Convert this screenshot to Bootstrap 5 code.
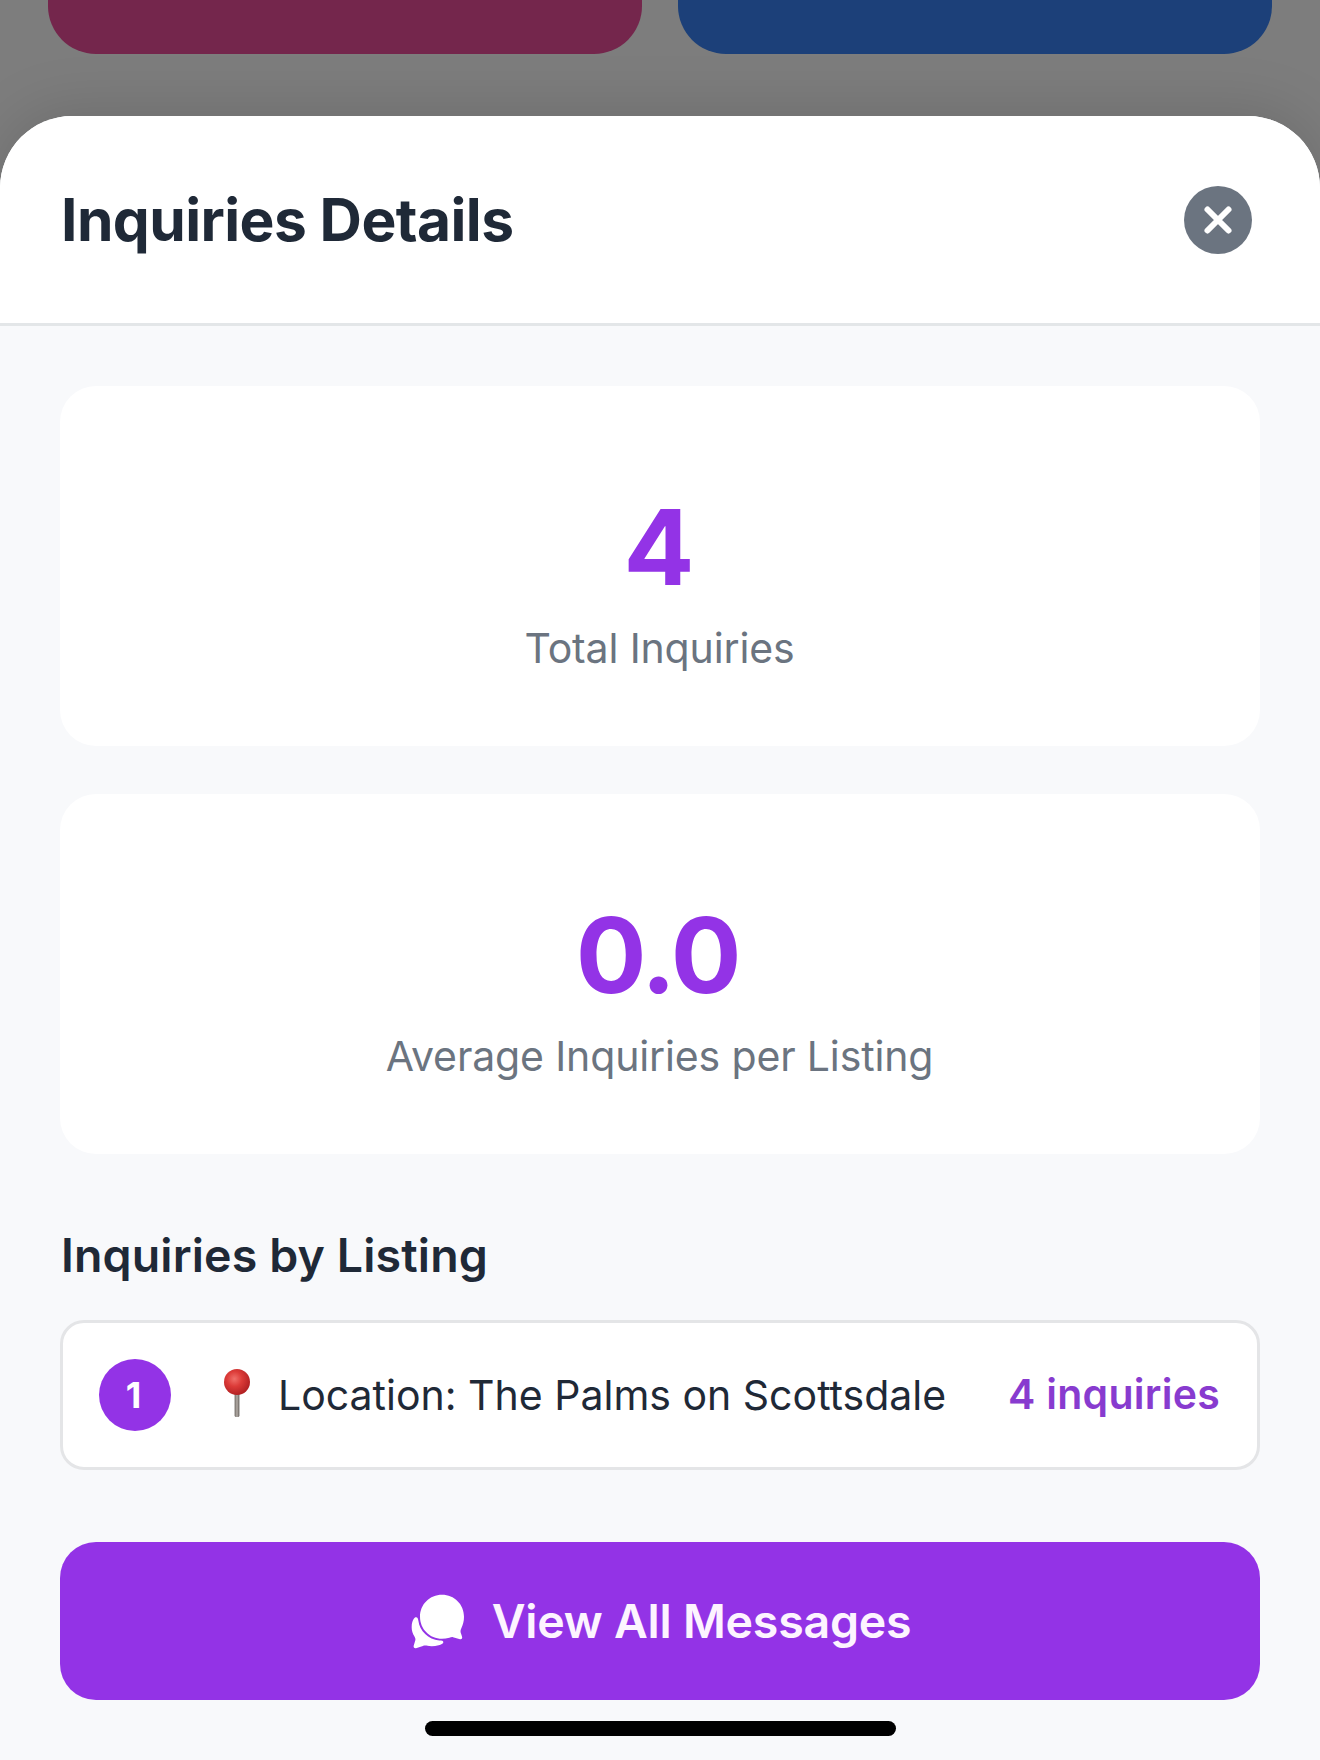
<!DOCTYPE html>
<html lang="en">
<head>
<meta charset="utf-8">
<meta name="viewport" content="width=device-width, initial-scale=1">
<title>Inquiries Details</title>
<link href="https://cdn.jsdelivr.net/npm/bootstrap@5.3.0/dist/css/bootstrap.min.css" rel="stylesheet">
<style>
  body { font-family: Inter, "Liberation Sans", sans-serif; background: #7d7d7d; color: #1f2937; height: 1760px; overflow: hidden; }
  .backdrop-row { height: 116px; padding: 0 48px; gap: 36px; }
  .tile { height: 54px; border-radius: 0 0 48px 48px; }
  .tile-pink { background: #74264c; }
  .tile-blue { background: #1c4079; }
  .sheet { height: 1644px; background: #f8f9fb; border-radius: 72px 72px 0 0; box-shadow: 0 -6px 60px rgba(0,0,0,.13); }
  .sheet-head { height: 210px; padding: 0 68px 0 61px; border-bottom: 3px solid #e3e6e8; border-radius: 72px 72px 0 0; }
  .sheet-title { font-size: 58.7px; font-weight: 700; letter-spacing: -.58px; line-height: 72px; }
  .close-btn { width: 68px; height: 68px; }
  .sheet-body { padding: 60px 60px 0; }
  .stat { height: 360px; padding-top: 107px; border-radius: 36px; margin-bottom: 48px; }
  .stat-num { font-size: 105px; font-weight: 700; line-height: 108px; color: #9333e6; margin-bottom: 22px; padding-right: 2px; }
  .num-avg { letter-spacing: -2.3px; padding-right: 5px; }
  .stat-label { font-size: 41px; line-height: 50px; color: #6b7480; letter-spacing: -.14px; padding-right: 1px; }
  .section-title { font-size: 46.5px; font-weight: 600; line-height: 60px; margin: 71px 0 35px 1px; letter-spacing: .14px; }
  .listing { height: 150px; border: 3px solid #e4e5e7; border-radius: 24px; padding: 0 37px 0 36px; }
  .rank { width: 72px; height: 72px; background: #9333e6; font-size: 36px; font-weight: 700; padding-right: 3px; }
  .pin { width: 28px; height: 50px; margin: 0 0 4px 52px; }
  .listing-name { font-size: 41px; line-height: 50px; margin-left: 27px; }
  .listing-count { font-size: 41px; font-weight: 600; line-height: 50px; color: #883bcf; letter-spacing: .26px; padding-bottom: 2px; }
  .cta { height: 158px; margin-top: 72px; border-radius: 36px; background: #9333e6; border: 0; }
  .cta:hover { background: #9333e6; }
  .cta-icon { width: 54px; height: 55px; margin: 0 27px 0 2px; }
  .cta-text { font-size: 46.5px; font-weight: 600; line-height: 60px; color: #fdf4ff; letter-spacing: -.24px; }
  .home-bar { width: 471px; height: 15px; margin-top: 21px; }
</style>
</head>
<body>
<div class="backdrop-row d-flex">
  <div class="tile tile-pink flex-fill"></div>
  <div class="tile tile-blue flex-fill"></div>
</div>
<main class="sheet">
  <header class="sheet-head d-flex align-items-center justify-content-between bg-white">
    <h1 class="sheet-title m-0 text-nowrap">Inquiries Details</h1>
    <button class="btn p-0 border-0 d-flex" type="button" aria-label="Close">
      <svg class="close-btn" viewBox="0 0 68 68"><circle cx="34" cy="34" r="34" fill="#6b7480"/><path d="M23.5 23.5 44.5 44.5M44.5 23.5 23.5 44.5" stroke="#fff" stroke-width="6" stroke-linecap="round"/></svg>
    </button>
  </header>
  <div class="sheet-body">
    <section class="stat bg-white text-center">
      <div class="stat-num">4</div>
      <div class="stat-label">Total Inquiries</div>
    </section>
    <section class="stat bg-white text-center">
      <div class="stat-num num-avg">0.0</div>
      <div class="stat-label">Average Inquiries per Listing</div>
    </section>
    <h2 class="section-title">Inquiries by Listing</h2>
    <div class="listing bg-white d-flex align-items-center">
      <span class="rank rounded-circle text-white d-flex align-items-center justify-content-center">1</span>
      <svg class="pin" viewBox="0 0 28 50">
        <defs>
          <radialGradient id="ball" cx=".4" cy=".38" r=".65"><stop offset="0" stop-color="#f0706a"/><stop offset=".45" stop-color="#dc3b38"/><stop offset="1" stop-color="#b01f22"/></radialGradient>
          <linearGradient id="stem"><stop offset="0" stop-color="#6d6762"/><stop offset=".5" stop-color="#b3aca6"/><stop offset="1" stop-color="#625c58"/></linearGradient>
        </defs>
        <rect x="11.6" y="24" width="4.8" height="25" rx="1.5" fill="url(#stem)"/>
        <circle cx="14" cy="14" r="13" fill="url(#ball)"/>
      </svg>
      <span class="listing-name text-nowrap">Location: The Palms on Scottsdale</span>
      <span class="listing-count text-nowrap ms-auto">4 inquiries</span>
    </div>
    <button class="btn cta w-100 d-flex align-items-center justify-content-center p-0" type="button">
      <svg class="cta-icon" viewBox="60 72 162 164" fill="#fff">
        <path d="M153 74C190 74 219 103 219 140C219 153 216 164 211 174C208 180 208 184 210 190L213 199C215 205 212 208 207 207L186 201C182 200 179 202 175 203C168 205 160 206 153 206C116 206 87 177 87 140C87 103 116 74 153 74Z"/>
        <path d="M75 141C80 141 81 145 82 151C86 183 112 208 145 211C152 211 157 212 157 216C157 220 150 223 143 225C129 229 118 229 106 226C100 225 96 227 91 229L75 234C70 235 67 232 68 227L73 210C74 206 73 203 70 198C65 190 62 181 62 171C62 159 65 150 69 145C71 142 73 141 75 141Z"/>
      </svg>
      <span class="cta-text text-nowrap">View All Messages</span>
    </button>
    <div class="home-bar bg-black rounded-pill mx-auto"></div>
  </div>
</main>
<script src="https://cdn.jsdelivr.net/npm/bootstrap@5.3.0/dist/js/bootstrap.bundle.min.js"></script>
</body>
</html>
